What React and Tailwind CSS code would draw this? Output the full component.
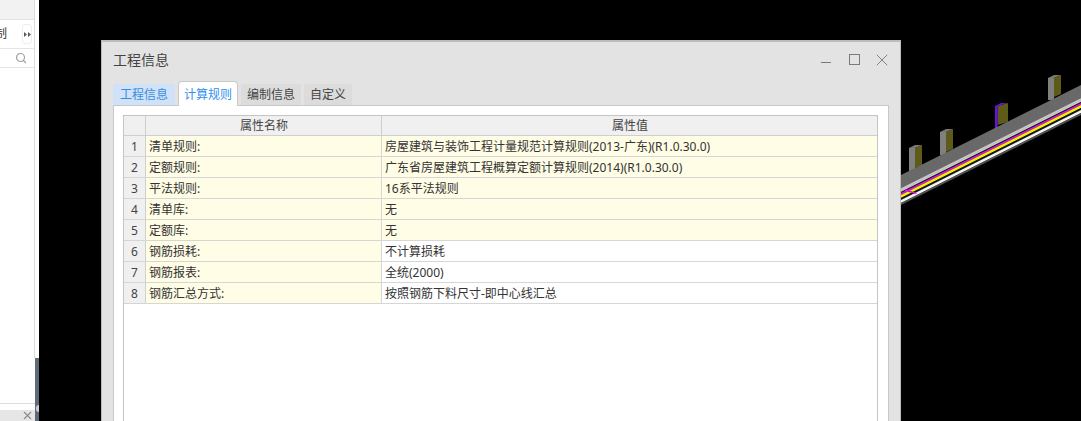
import React from 'react';
import { Search, X } from 'lucide-react';

const tabs = [
    { label: '工程信息', cls: 'w-[62px] h-[21px] bg-[#cfe2f8] text-[#3b8ddd] rounded-t-[3px]' },
    { label: '计算规则', cls: 'w-[60px] h-[25px] bg-white text-[#2f8fee] border border-b-0 border-[#c8c8c8] rounded-t-[4px] -mb-px z-10' },
    { label: '编制信息', cls: 'w-[60px] h-[21px] bg-[#dcdcdc] text-[#444] rounded-t-[3px]' },
    { label: '自定义', cls: 'w-[48px] h-[21px] bg-[#dcdcdc] text-[#444] rounded-t-[3px]' },
];

const rows = [
    { name: '清单规则:', value: '房屋建筑与装饰工程计量规范计算规则(2013-广东)(R1.0.30.0)', yellow: true },
    { name: '定额规则:', value: '广东省房屋建筑工程概算定额计算规则(2014)(R1.0.30.0)', yellow: true },
    { name: '平法规则:', value: '16系平法规则', yellow: true },
    { name: '清单库:', value: '无', yellow: true },
    { name: '定额库:', value: '无', yellow: true },
    { name: '钢筋损耗:', value: '不计算损耗', yellow: false },
    { name: '钢筋报表:', value: '全统(2000)', yellow: false },
    { name: '钢筋汇总方式:', value: '按照钢筋下料尺寸-即中心线汇总', yellow: false },
];

const bands = [
    { top: 175, bottom: 188, fill: '#696969' },
    { top: 188, bottom: 192, fill: '#c4c4c4' },
    { top: 192, bottom: 193, fill: '#222222' },
    { top: 193, bottom: 195, fill: '#e010e0' },
    { top: 195, bottom: 198, fill: '#f2ee10' },
    { top: 198, bottom: 200, fill: '#181818' },
    { top: 200, bottom: 203, fill: '#f4f4f4' },
    { top: 203, bottom: 205, fill: '#555555' },
];

const pillars = [
    { x: 909, y: 148, h: 23, side: 6, color: '#808080', cap: '#777777' },
    { x: 940, y: 132, h: 23, side: 6, color: '#808080', cap: '#777777' },
    { x: 995, y: 106, h: 22, side: 2.5, color: '#6a10e0', cap: '#6a10e0' },
    { x: 1048, y: 78, h: 22, side: 6, color: '#808080', cap: '#777777' },
];

// the 3D model peeking out behind the dialog
const Model = () => (
    <svg viewBox="39 0 1042 421" className="absolute inset-0 w-full h-full">
        {pillars.map((p) => (
            <g key={p.x}>
                <polygon points={`${p.x + p.side},${p.y} ${p.x + 13},${p.y - 3} ${p.x + 13},${p.y + p.h - 6} ${p.x + p.side},${p.y + p.h - 3}`} fill="#5d5a1a" />
                <polygon points={`${p.x},${p.y} ${p.x + p.side},${p.y} ${p.x + p.side},${p.y + p.h} ${p.x},${p.y + p.h}`} fill={p.color} />
                <polygon points={`${p.x},${p.y} ${p.x + 6},${p.y - 3} ${p.x + 13},${p.y - 3} ${p.x + p.side},${p.y}`} fill={p.cap} />
            </g>
        ))}
        {bands.map((b) => (
            <polygon key={b.top} points={`901,${b.top} 1081,${b.top - 90} 1081,${b.bottom - 90} 901,${b.bottom}`} fill={b.fill} />
        ))}
        <polygon points="905,189 917,193 916,194 905,191" fill="#e010e0" />
    </svg>
);

const Sidebar = () => (
    <div className="w-[39px] h-full shrink-0 flex flex-col bg-white relative">
        <div className="h-[19px] bg-[#f2f2f2] mr-[4px]" />
        <div className="h-[30px] mr-[4px] border-y border-[#e4e4e4] flex items-center justify-end overflow-hidden">
            <span className="text-[12px] text-[#333] whitespace-nowrap">制</span>
            <div className="w-[10px] h-[20px] ml-[15px] mr-[3px] shrink-0 flex items-center justify-center border border-[#eeeeee] rounded-[3px]">
                <svg width="7" height="5" viewBox="0 0 7 5">
                    <polygon points="0,0 3,2.5 0,5" fill="#555b66" />
                    <polygon points="4,0 7,2.5 4,5" fill="#555b66" />
                </svg>
            </div>
        </div>
        <div className="h-[19px] mr-[4px] border-b border-[#e4e4e4] flex items-center justify-end pr-[8px]">
            <Search size={12} strokeWidth={2.4} className="text-[#a0a0a0]" />
        </div>
        <div className="flex-1 mr-[4px] border-b border-[#dddddd]" />
        <div className="h-[6px] mr-[4px]" />
        <div className="h-[11px] mr-[4px] bg-[#e6e6e6] flex items-center justify-end pr-[1px]">
            <X size={13} strokeWidth={2} className="text-[#8a8a8a]" />
        </div>
        <div className="absolute right-0 top-[358px] bottom-0 w-[4px] bg-[#5f6b76] flex flex-col items-end pt-[47px]">
            <div className="w-[3px] h-[7px] bg-[#c8ccd0] rounded-l-[3px]" />
        </div>
        <div className="absolute right-[4px] top-0 bottom-[63px] w-px bg-[#dcdcdc]" />
    </div>
);

const Dialog = () => (
    <div className="relative w-[800px] h-[381px] bg-[#e3e3e3] border-t-2 border-x border-[#bcbcbc] px-[11px] overflow-hidden">
        <div className="h-[40px] flex items-center justify-between pb-[5px]">
            <span className="text-[14px] text-[#444]">工程信息</span>
            <div className="flex items-center text-[#7a7a7a] -mr-[3px]">
                <div className="w-[10px] h-px bg-[#7a7a7a] translate-y-[3px]" />
                <div className="w-[11px] h-[11px] ml-[18px] border border-[#7a7a7a]" />
                <X size={20} strokeWidth={1.1} className="ml-[12px]" />
            </div>
        </div>
        <div className="flex items-end gap-[3px] h-[23px]">
            {tabs.map((tab) => (
                <div key={tab.label} className={`flex items-center justify-center pt-px text-[12px] ${tab.cls}`}>
                    {tab.label}
                </div>
            ))}
        </div>
        <div className="h-full bg-white border border-[#c8c8c8] pl-[9px] pr-[10px] pt-[9px]">
            <div className="h-full border-x border-t border-[#c4c4c4] text-[12px] text-[#333]">
                <div className="flex h-[20px] bg-[#f0f0f0] border-b border-[#cfcfcf] text-[#444]">
                    <div className="w-[22px] border-r border-[#cfcfcf]" />
                    <div className="w-[236px] border-r border-[#cfcfcf] flex items-center justify-center pt-px pl-px">属性名称</div>
                    <div className="flex-1 flex items-center justify-center pt-px pl-px">属性值</div>
                </div>
                {rows.map((row, i) => (
                    <div key={row.name} className="flex h-[21px] border-b border-[#d6d6d6]">
                        <div className="w-[22px] bg-[#f0f0f0] border-r border-[#cfcfcf] flex items-center justify-center pt-px text-[#444]">{i + 1}</div>
                        <div className="w-[236px] bg-[#fffde6] border-r border-[#d6d6d6] flex items-center pl-[3px] pt-px">{row.name}</div>
                        <div className={`flex-1 flex items-center pl-[3px] pt-px ${row.yellow ? 'bg-[#fffde6]' : 'bg-white'}`}>{row.value}</div>
                    </div>
                ))}
            </div>
        </div>
    </div>
);

export default function App() {
    return (
        <div className="w-[1081px] h-[421px] flex overflow-hidden bg-black font-['Noto_Sans','Noto_Sans_CJK_SC',sans-serif]">
            <Sidebar />
            <div className="relative flex-1 pl-[62px] pt-[40px]">
                <Model />
                <Dialog />
            </div>
        </div>
    );
}
